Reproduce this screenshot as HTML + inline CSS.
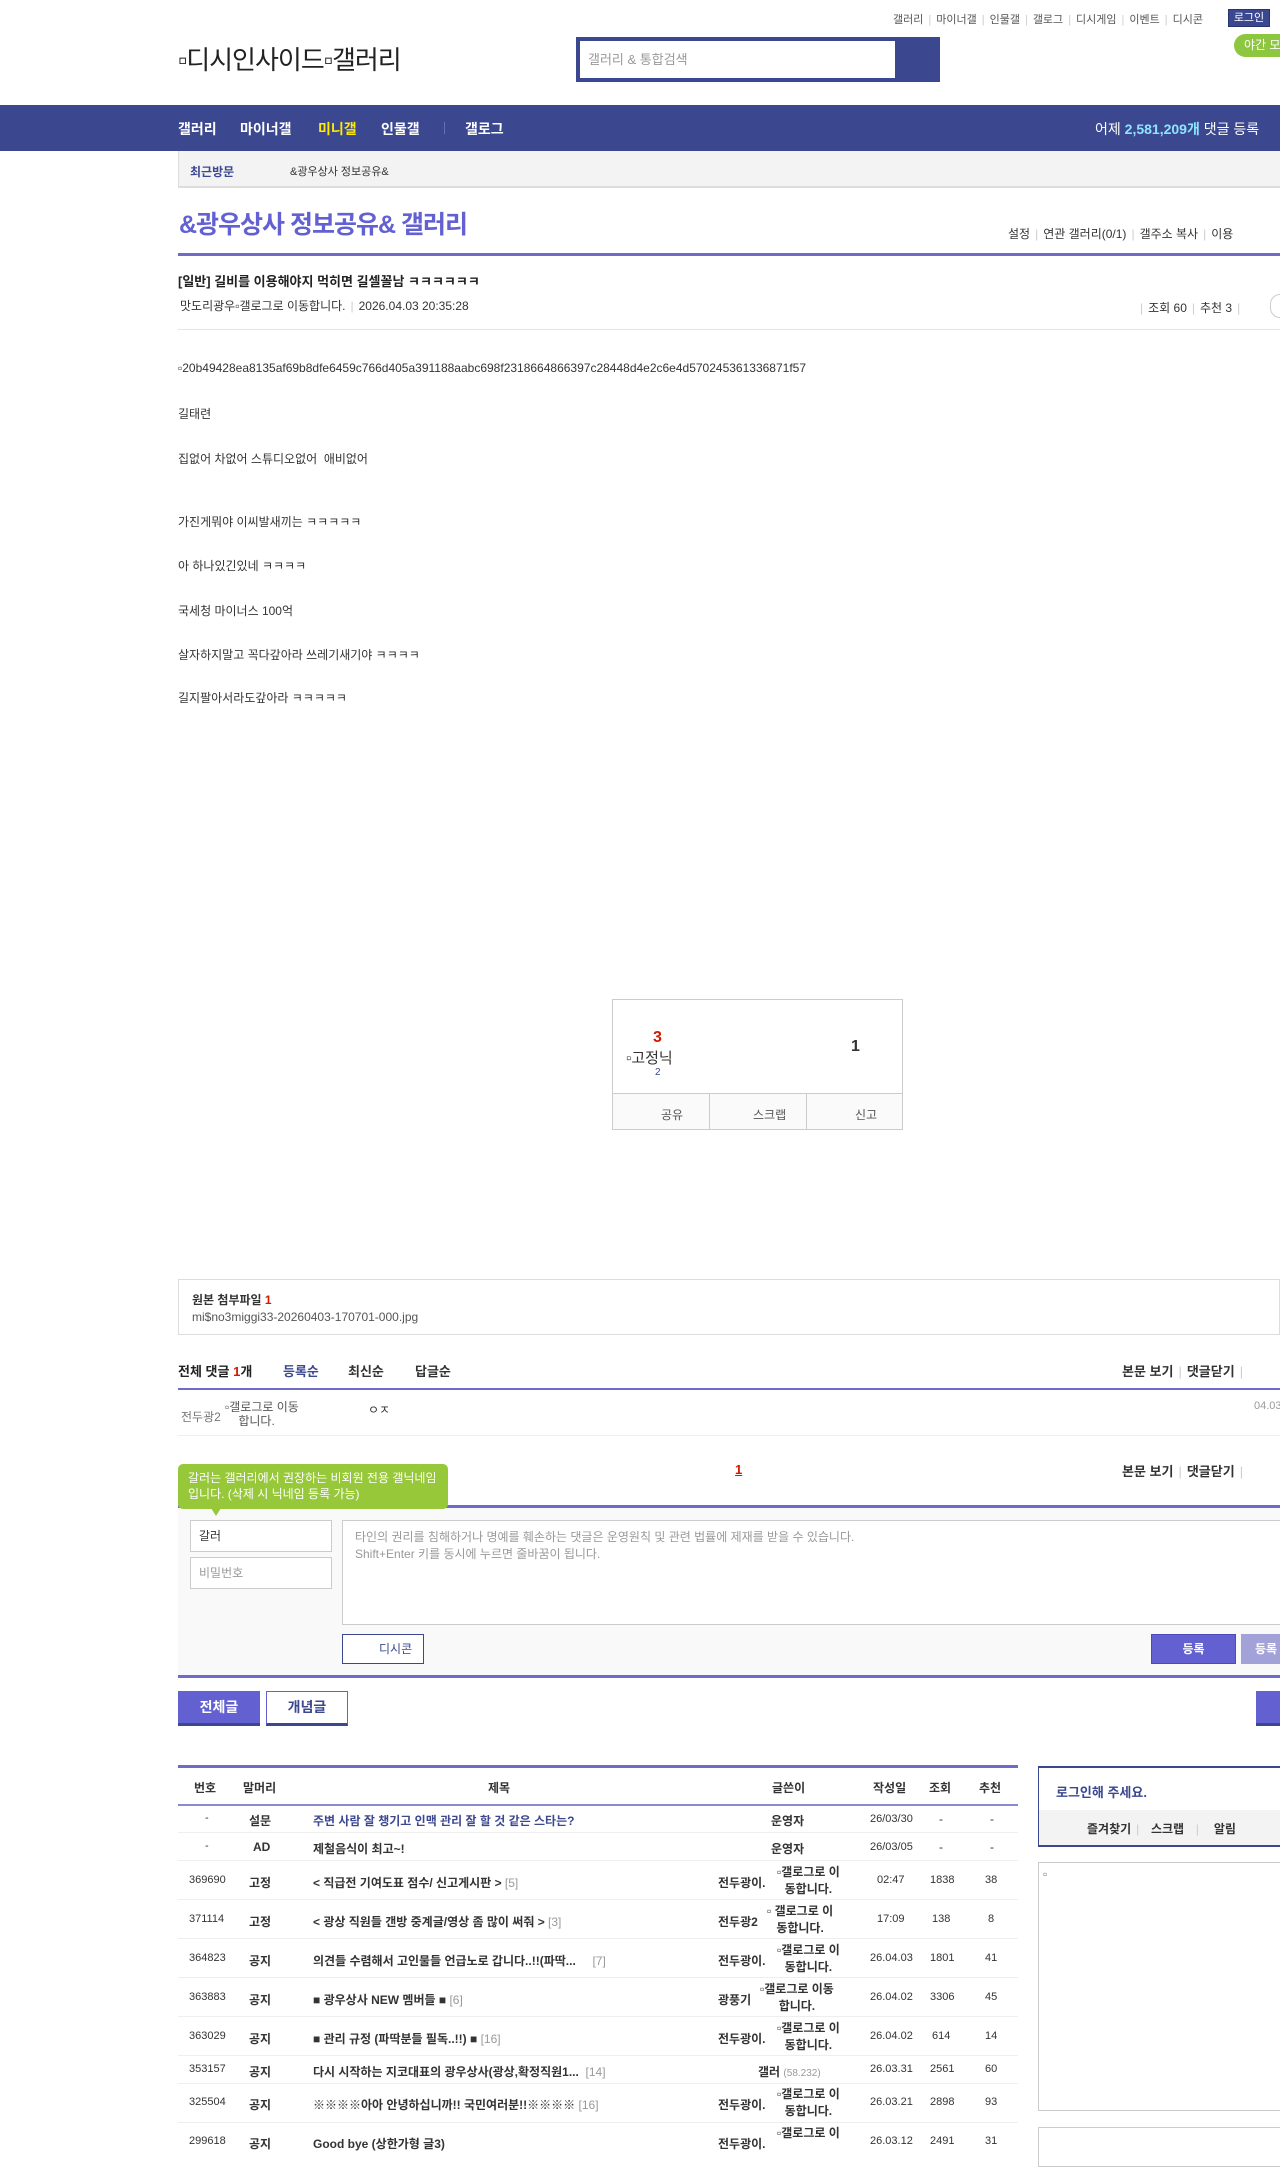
<!DOCTYPE html>
<html><head><meta charset="utf-8">
<style>
*{margin:0;padding:0;box-sizing:border-box}
body{width:1280px;height:2143px;overflow:hidden;position:relative;background:#fff;font-family:"Liberation Sans","Noto Sans CJK KR",sans-serif;font-size:12px;color:#333}
.a{position:absolute;white-space:nowrap}
.b{font-weight:bold}
.sep{color:#ccc;margin:0 5px}
.purp{background:#6e6cc6}
table{border-collapse:collapse}
</style></head><body>
<!-- top links -->
<div class="a" style="left:893px;top:11px;font-size:11px;color:#555">갤러리<span class="sep">|</span>마이너갤<span class="sep">|</span>인물갤<span class="sep">|</span>갤로그<span class="sep">|</span>디시게임<span class="sep">|</span>이벤트<span class="sep">|</span>디시콘</div>
<div class="a" style="left:1228px;top:9px;width:42px;height:18px;background:#3b4890;border:1px solid #29336e;color:#fff;font-size:11px;line-height:16px;text-align:center">로그인</div>
<div class="a" style="left:1234px;top:34px;width:60px;height:23px;background:#8dc63f;border-radius:12px;color:#fff;font-size:12px;line-height:23px;padding-left:10px">야간 모드</div>
<!-- logo -->
<div class="a" style="left:178px;top:40px;font-size:26px;color:#222;letter-spacing:-1px">▫디시인사이드▫갤러리</div>
<!-- search -->
<div class="a" style="left:576px;top:37px;width:364px;height:45px;background:#3b4890"></div>
<div class="a" style="left:580px;top:41px;width:315px;height:37px;background:#fff;color:#999;font-size:13px;line-height:37px;padding-left:8px">갤러리 &amp; 통합검색</div>
<!-- nav -->
<div class="a" style="left:0;top:105px;width:1280px;height:46px;background:#3b4890"></div>
<div class="a b" style="left:178px;top:119px;font-size:14px;color:#fff">갤러리</div>
<div class="a b" style="left:240px;top:119px;font-size:14px;color:#fff">마이너갤</div>
<div class="a b" style="left:318px;top:119px;font-size:14px;color:#ffea00">미니갤</div>
<div class="a b" style="left:381px;top:119px;font-size:14px;color:#fff">인물갤</div>
<div class="a" style="left:444px;top:122px;width:1px;height:12px;background:#6672b0"></div>
<div class="a b" style="left:465px;top:119px;font-size:14px;color:#fff">갤로그</div>
<div class="a" style="left:1095px;top:119px;font-size:14px;color:#fff">어제 <b style="color:#8ee4ff">2,581,209개</b> 댓글 등록</div>
<!-- recent -->
<div class="a" style="left:178px;top:151px;width:1102px;height:37px;background:#f3f3f3;border-left:1px solid #ddd;border-bottom:2px solid #ddd"></div>
<div class="a b" style="left:190px;top:163px;font-size:12px;color:#3b4890">최근방문</div>
<div class="a" style="left:290px;top:163px;font-size:11px;color:#333">&amp;광우상사 정보공유&amp;</div>
<!-- gallery title -->
<div class="a b" style="left:179px;top:205px;font-size:25px;color:#6361d2;letter-spacing:-1px">&amp;광우상사 정보공유&amp; 갤러리</div>
<div class="a" style="left:1008px;top:225px;font-size:12px;color:#333">설정<span class="sep">|</span>연관 갤러리(0/1)<span class="sep">|</span>갤주소 복사<span class="sep">|</span>이용</div>
<div class="a purp" style="left:178px;top:253px;width:1102px;height:3px"></div>
<!-- post header -->
<div class="a b" style="left:178px;top:271px;font-size:13px;color:#222">[일반] 길비를 이용해야지 먹히면 길셀꼴남 ㅋㅋㅋㅋㅋㅋ</div>
<div class="a" style="left:180px;top:297px;font-size:12px;color:#333">맛도리광우▫갤로그로 이동합니다.<span class="sep">|</span>2026.04.03 20:35:28</div>
<div class="a" style="left:1135px;top:299px;font-size:12px;color:#333"><span class="sep">|</span>조회 60<span class="sep">|</span>추천 3<span class="sep">|</span></div>
<div class="a" style="left:1270px;top:294px;width:20px;height:24px;border:1px solid #ccc;border-radius:12px"></div>
<div class="a" style="left:178px;top:329px;width:1102px;height:1px;background:#e5e5e5"></div>
<!-- body -->
<div class="a" style="left:178px;top:361px;font-size:12px">▫20b49428ea8135af69b8dfe6459c766d405a391188aabc698f2318664866397c28448d4e2c6e4d570245361336871f57</div>
<div class="a" style="left:178px;top:405px">길태련</div>
<div class="a" style="left:178px;top:450px">집없어 차없어 스튜디오없어&nbsp; 애비없어</div>
<div class="a" style="left:178px;top:513px">가진게뭐야 이씨발새끼는 ㅋㅋㅋㅋㅋ</div>
<div class="a" style="left:178px;top:557px">아 하나있긴있네 ㅋㅋㅋㅋ</div>
<div class="a" style="left:178px;top:602px">국세청 마이너스 100억</div>
<div class="a" style="left:178px;top:646px">살자하지말고 꼭다갚아라 쓰레기새기야 ㅋㅋㅋㅋ</div>
<div class="a" style="left:178px;top:689px">길지팔아서라도갚아라 ㅋㅋㅋㅋㅋ</div>
<!-- recommend box -->
<div class="a" style="left:612px;top:999px;width:291px;height:131px;border:1px solid #ccc"></div>
<div class="a" style="left:612px;top:1093px;width:291px;height:37px;border:1px solid #ccc;background:#fafafa"></div>
<div class="a" style="left:709px;top:1093px;width:1px;height:37px;background:#ccc"></div>
<div class="a" style="left:806px;top:1093px;width:1px;height:37px;background:#ccc"></div>
<div class="a b" style="left:653px;top:1029px;font-size:16px;color:#d31900">3</div>
<div class="a" style="left:626px;top:1047px;font-size:15px;color:#333">▫고정닉</div>
<div class="a" style="left:655px;top:1067px;font-size:10px;color:#3b4890">2</div>
<div class="a b" style="left:851px;top:1038px;font-size:16px;color:#333">1</div>
<div class="a" style="left:661px;top:1106px;font-size:12px;color:#555">공유</div>
<div class="a" style="left:753px;top:1106px;font-size:12px;color:#555">스크랩</div>
<div class="a" style="left:855px;top:1106px;font-size:12px;color:#555">신고</div>
<!-- attachment -->
<div class="a" style="left:178px;top:1279px;width:1102px;height:56px;border:1px solid #ddd"></div>
<div class="a b" style="left:192px;top:1291px;font-size:12px;color:#333">원본 첨부파일 <span style="color:#d31900">1</span></div>
<div class="a" style="left:192px;top:1310px;font-size:12px;color:#555">mi$no3miggi33-20260403-170701-000.jpg</div>
<!-- comments -->
<div class="a b" style="left:178px;top:1361px;font-size:13px;color:#222">전체 댓글 <span style="color:#d31900">1</span>개</div>
<div class="a b" style="left:283px;top:1361px;font-size:13px;color:#3b4890">등록순</div>
<div class="a b" style="left:348px;top:1361px;font-size:13px;color:#333">최신순</div>
<div class="a b" style="left:415px;top:1361px;font-size:13px;color:#333">답글순</div>
<div class="a b" style="left:1122px;top:1361px;font-size:13px;color:#333">본문 보기<span class="sep" style="font-weight:normal">|</span>댓글닫기<span class="sep" style="font-weight:normal">|</span></div>
<div class="a purp" style="left:178px;top:1388px;width:1102px;height:2px"></div>
<div class="a" style="left:181px;top:1408px;font-size:12px;color:#777">전두광2</div>
<div class="a" style="left:225px;top:1400px;font-size:12px;color:#555;white-space:normal;width:100px;line-height:14px">▫갤로그로 이동<br>&nbsp;&nbsp;&nbsp;&nbsp;합니다.</div>
<div class="a" style="left:368px;top:1401px;font-size:12px;color:#333">ㅇㅈ</div>
<div class="a" style="left:1254px;top:1400px;font-size:11px;color:#999">04.03</div>
<div class="a" style="left:178px;top:1435px;width:1102px;height:1px;background:#eee"></div>
<div class="a b" style="left:735px;top:1462px;font-size:13px;color:#d31900;text-decoration:underline">1</div>
<div class="a b" style="left:1122px;top:1461px;font-size:13px;color:#333">본문 보기<span class="sep" style="font-weight:normal">|</span>댓글닫기<span class="sep" style="font-weight:normal">|</span></div>
<!-- form -->
<div class="a" style="left:178px;top:1506px;width:1102px;height:170px;background:#f9f9f9"></div>
<div class="a purp" style="left:178px;top:1505px;width:1102px;height:3px"></div>
<div class="a purp" style="left:178px;top:1675px;width:1102px;height:3px"></div>
<div class="a" style="left:178px;top:1464px;width:270px;height:45px;background:#96c83a;border-radius:5px;color:#fff;font-size:12px;line-height:16px;padding:6px 10px;white-space:normal">갈러는 갤러리에서 권장하는 비회원 전용 갤닉네임입니다. (삭제 시 닉네임 등록 가능)</div>
<div class="a" style="left:211px;top:1508px;width:0;height:0;border-left:5px solid transparent;border-right:5px solid transparent;border-top:8px solid #96c83a"></div>
<div class="a" style="left:190px;top:1520px;width:142px;height:32px;border:1px solid #ccc;background:#fff;font-size:12px;color:#333;line-height:30px;padding-left:8px">갈러</div>
<div class="a" style="left:190px;top:1557px;width:142px;height:32px;border:1px solid #ccc;background:#fff;font-size:12px;color:#999;line-height:30px;padding-left:8px">비밀번호</div>
<div class="a" style="left:342px;top:1520px;width:950px;height:105px;border:1px solid #ccc;background:#fff;font-size:12px;color:#999;line-height:17px;padding:8px 12px;white-space:normal">타인의 권리를 침해하거나 명예를 훼손하는 댓글은 운영원칙 및 관련 법률에 제재를 받을 수 있습니다.<br>Shift+Enter 키를 동시에 누르면 줄바꿈이 됩니다.</div>
<div class="a" style="left:342px;top:1634px;width:82px;height:30px;border:1px solid #3b4890;background:#fff;font-size:12px;color:#3b4890;line-height:28px;padding-left:36px">디시콘</div>
<div class="a b" style="left:1151px;top:1634px;width:85px;height:30px;background:#6361d2;border:1px solid #4d4bb8;color:#fff;font-size:12px;line-height:28px;text-align:center">등록</div>
<div class="a b" style="left:1241px;top:1634px;width:60px;height:30px;background:#a3a2d8;color:#fff;font-size:12px;line-height:30px;padding-left:14px">등록</div>
<!-- list buttons -->
<div class="a b" style="left:178px;top:1691px;width:82px;height:35px;background:#6361d2;border-bottom:3px solid #3b4890;color:#fff;font-size:14px;line-height:32px;text-align:center">전체글</div>
<div class="a b" style="left:266px;top:1691px;width:82px;height:35px;background:#fff;border:1px solid #6361d2;border-bottom:3px solid #3b4890;color:#3b4890;font-size:14px;line-height:30px;text-align:center">개념글</div>
<div class="a" style="left:1256px;top:1691px;width:40px;height:35px;background:#6361d2;border-bottom:3px solid #3b4890"></div>
<!-- table -->
<div class="a purp" style="left:178px;top:1765px;width:840px;height:3px"></div>
<div class="a purp" style="left:178px;top:1804px;width:840px;height:2px;opacity:.8"></div>
<div class="a b" style="left:194px;top:1779px;font-size:12px">번호</div>
<div class="a b" style="left:243px;top:1779px;font-size:12px">말머리</div>
<div class="a b" style="left:488px;top:1779px;font-size:12px">제목</div>
<div class="a b" style="left:772px;top:1779px;font-size:12px">글쓴이</div>
<div class="a b" style="left:873px;top:1779px;font-size:12px">작성일</div>
<div class="a b" style="left:929px;top:1779px;font-size:12px">조회</div>
<div class="a b" style="left:979px;top:1779px;font-size:12px">추천</div>

<!-- rows -->
<div class="a" style="left:178px;top:1832px;width:840px;height:1px;background:#eee"></div>
<div class="a" style="left:178px;top:1860px;width:840px;height:1px;background:#eee"></div>
<div class="a" style="left:178px;top:1899px;width:840px;height:1px;background:#eee"></div>
<div class="a" style="left:178px;top:1938px;width:840px;height:1px;background:#eee"></div>
<div class="a" style="left:178px;top:1977px;width:840px;height:1px;background:#eee"></div>
<div class="a" style="left:178px;top:2016px;width:840px;height:1px;background:#eee"></div>
<div class="a" style="left:178px;top:2055px;width:840px;height:1px;background:#eee"></div>
<div class="a" style="left:178px;top:2083px;width:840px;height:1px;background:#eee"></div>
<div class="a" style="left:178px;top:2122px;width:840px;height:1px;background:#eee"></div>

<div class="a" style="left:205px;top:1812px;font-size:11px">-</div>
<div class="a b" style="left:249px;top:1812px">설문</div>
<div class="a b" style="left:313px;top:1812px;color:#3b4890">주변 사람 잘 챙기고 인맥 관리 잘 할 것 같은 스타는?</div>
<div class="a b" style="left:771px;top:1812px">운영자</div>
<div class="a" style="left:870px;top:1813px;font-size:11px">26/03/30</div>
<div class="a" style="left:939px;top:1812px">-</div><div class="a" style="left:990px;top:1812px">-</div>

<div class="a" style="left:205px;top:1840px;font-size:11px">-</div>
<div class="a b" style="left:253px;top:1840px">AD</div>
<div class="a b" style="left:313px;top:1840px">제철음식이 최고~!</div>
<div class="a b" style="left:771px;top:1840px">운영자</div>
<div class="a" style="left:870px;top:1841px;font-size:11px">26/03/05</div>
<div class="a" style="left:939px;top:1840px">-</div><div class="a" style="left:990px;top:1840px">-</div>

<div class="a" style="left:189px;top:1874px;font-size:11px">369690</div>
<div class="a b" style="left:249px;top:1874px">고정</div>
<div class="a b" style="left:313px;top:1874px">&lt; 직급전 기여도표 점수/ 신고게시판 &gt; <span style="color:#999;font-weight:normal">[5]</span></div>
<div class="a b" style="left:718px;top:1874px">전두광이.</div>
<div class="a b" style="left:777px;top:1864px;line-height:17px;text-align:center">▫갤로그로 이<br>동합니다.</div>
<div class="a" style="left:877px;top:1874px;font-size:11px">02:47</div>
<div class="a" style="left:930px;top:1874px;font-size:11px">1838</div>
<div class="a" style="left:985px;top:1874px;font-size:11px">38</div>

<div class="a" style="left:189px;top:1913px;font-size:11px">371114</div>
<div class="a b" style="left:249px;top:1913px">고정</div>
<div class="a b" style="left:313px;top:1913px">&lt; 광상 직원들 갠방 중계글/영상 좀 많이 써줘 &gt; <span style="color:#999;font-weight:normal">[3]</span></div>
<div class="a b" style="left:718px;top:1913px">전두광2</div>
<div class="a b" style="left:767px;top:1903px;line-height:17px;text-align:center">▫ 갤로그로 이<br>동합니다.</div>
<div class="a" style="left:877px;top:1913px;font-size:11px">17:09</div>
<div class="a" style="left:932px;top:1913px;font-size:11px">138</div>
<div class="a" style="left:988px;top:1913px;font-size:11px">8</div>

<div class="a" style="left:189px;top:1952px;font-size:11px">364823</div>
<div class="a b" style="left:249px;top:1952px">공지</div>
<div class="a b" style="left:313px;top:1952px">의견들 수렴해서 고인물들 언급노로 갑니다..!!(파딱...&nbsp;&nbsp;&nbsp;&nbsp; <span style="color:#999;font-weight:normal">[7]</span></div>
<div class="a b" style="left:718px;top:1952px">전두광이.</div>
<div class="a b" style="left:777px;top:1942px;line-height:17px;text-align:center">▫갤로그로 이<br>동합니다.</div>
<div class="a" style="left:870px;top:1952px;font-size:11px">26.04.03</div>
<div class="a" style="left:930px;top:1952px;font-size:11px">1801</div>
<div class="a" style="left:985px;top:1952px;font-size:11px">41</div>

<div class="a" style="left:189px;top:1991px;font-size:11px">363883</div>
<div class="a b" style="left:249px;top:1991px">공지</div>
<div class="a b" style="left:313px;top:1991px">■ 광우상사 NEW 멤버들 ■ <span style="color:#999;font-weight:normal">[6]</span></div>
<div class="a b" style="left:718px;top:1991px">광풍기</div>
<div class="a b" style="left:760px;top:1981px;line-height:17px;text-align:center">▫갤로그로 이동<br>합니다.</div>
<div class="a" style="left:870px;top:1991px;font-size:11px">26.04.02</div>
<div class="a" style="left:930px;top:1991px;font-size:11px">3306</div>
<div class="a" style="left:985px;top:1991px;font-size:11px">45</div>

<div class="a" style="left:189px;top:2030px;font-size:11px">363029</div>
<div class="a b" style="left:249px;top:2030px">공지</div>
<div class="a b" style="left:313px;top:2030px">■ 관리 규정 (파딱분들 필독..!!) ■ <span style="color:#999;font-weight:normal">[16]</span></div>
<div class="a b" style="left:718px;top:2030px">전두광이.</div>
<div class="a b" style="left:777px;top:2020px;line-height:17px;text-align:center">▫갤로그로 이<br>동합니다.</div>
<div class="a" style="left:870px;top:2030px;font-size:11px">26.04.02</div>
<div class="a" style="left:932px;top:2030px;font-size:11px">614</div>
<div class="a" style="left:985px;top:2030px;font-size:11px">14</div>

<div class="a" style="left:189px;top:2063px;font-size:11px">353157</div>
<div class="a b" style="left:249px;top:2063px">공지</div>
<div class="a b" style="left:313px;top:2063px">다시 시작하는 지코대표의 광우상사(광상,확정직원1...&nbsp; <span style="color:#999;font-weight:normal">[14]</span></div>
<div class="a b" style="left:758px;top:2063px">갤러 <span style="font-weight:normal;color:#999;font-size:10px">(58.232)</span></div>
<div class="a" style="left:870px;top:2063px;font-size:11px">26.03.31</div>
<div class="a" style="left:930px;top:2063px;font-size:11px">2561</div>
<div class="a" style="left:985px;top:2063px;font-size:11px">60</div>

<div class="a" style="left:189px;top:2096px;font-size:11px">325504</div>
<div class="a b" style="left:249px;top:2096px">공지</div>
<div class="a b" style="left:313px;top:2096px">※※※※아아 안녕하십니까!! 국민여러분!!※※※※ <span style="color:#999;font-weight:normal">[16]</span></div>
<div class="a b" style="left:718px;top:2096px">전두광이.</div>
<div class="a b" style="left:777px;top:2086px;line-height:17px;text-align:center">▫갤로그로 이<br>동합니다.</div>
<div class="a" style="left:870px;top:2096px;font-size:11px">26.03.21</div>
<div class="a" style="left:930px;top:2096px;font-size:11px">2898</div>
<div class="a" style="left:985px;top:2096px;font-size:11px">93</div>

<div class="a" style="left:189px;top:2135px;font-size:11px">299618</div>
<div class="a b" style="left:249px;top:2135px">공지</div>
<div class="a b" style="left:313px;top:2135px">Good bye (상한가형 글3)</div>
<div class="a b" style="left:718px;top:2135px">전두광이.</div>
<div class="a b" style="left:777px;top:2125px;line-height:17px">▫갤로그로 이</div>
<div class="a" style="left:870px;top:2135px;font-size:11px">26.03.12</div>
<div class="a" style="left:930px;top:2135px;font-size:11px">2491</div>
<div class="a" style="left:985px;top:2135px;font-size:11px">31</div>

<!-- sidebar -->
<div class="a" style="left:1038px;top:1766px;width:260px;height:81px;border:1px solid #3b4890;border-width:2px 1px 2px 1px"></div>
<div class="a" style="left:1039px;top:1810px;width:260px;height:35px;background:#f3f3f3"></div>
<div class="a b" style="left:1056px;top:1782px;font-size:13px;color:#3b4890">로그인해 주세요.</div>
<div class="a b" style="left:1087px;top:1820px;font-size:12px;color:#333">즐겨찾기<span class="sep" style="font-weight:normal">|</span>&nbsp; 스크랩 &nbsp;<span class="sep" style="font-weight:normal">|</span>&nbsp;&nbsp; 알림</div>
<div class="a" style="left:1038px;top:1862px;width:260px;height:249px;border:1px solid #ccc;padding:4px;color:#777">▫</div>
<div class="a" style="left:1038px;top:2127px;width:260px;height:40px;border:1px solid #ccc"></div>
</body></html>
